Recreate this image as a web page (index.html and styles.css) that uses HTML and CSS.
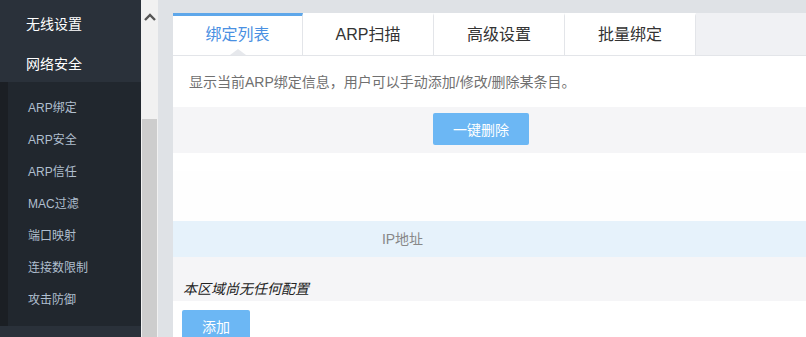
FILE: index.html
```html
<!DOCTYPE html>
<html lang="zh-CN">
<head>
<meta charset="utf-8">
<title>ARP绑定</title>
<link rel="stylesheet" href="styles.css">
</head>
<body>
<div class="page">
  <aside class="sidebar">
    <div class="menu-top">
      <div class="menu-item">无线设置</div>
      <div class="menu-item">网络安全</div>
    </div>
    <ul class="submenu">
      <li>ARP绑定</li>
      <li>ARP安全</li>
      <li>ARP信任</li>
      <li>MAC过滤</li>
      <li>端口映射</li>
      <li>连接数限制</li>
      <li>攻击防御</li>
    </ul>
    <div class="menu-bottom"></div>
  </aside>
  <div class="scrollbar">
    <div class="scroll-up">
      <svg width="12" height="9" viewBox="0 0 12 9"><path d="M1 8 L6 3 L11 8" fill="none" stroke="#555" stroke-width="2.4"/></svg>
    </div>
    <div class="scroll-thumb"></div>
  </div>
  <main class="main">
    <div class="card">
      <div class="tabs">
        <div class="tab active">绑定列表<span class="caret"></span></div>
        <div class="tab">ARP扫描</div>
        <div class="tab">高级设置</div>
        <div class="tab">批量绑定</div>
        <div class="tab-fill"></div>
      </div>
      <p class="desc">显示当前ARP绑定信息，用户可以手动添加/修改/删除某条目。</p>
      <div class="toolbar">
        <button class="btn btn-del">一键删除</button>
      </div>
      <div class="spacer-a"></div>
      <div class="spacer-b"></div>
      <div class="table-head">
        <div class="th">IP地址</div>
      </div>
      <div class="empty">本区域尚无任何配置</div>
      <div class="actions">
        <button class="btn btn-add">添加</button>
      </div>
    </div>
  </main>
</div>
</body>
</html>
```

FILE: styles.css
```css
* { box-sizing: border-box; }
html, body { margin: 0; padding: 0; }
body {
  font-family: "Noto Sans CJK SC", "Liberation Sans", sans-serif;
  width: 806px;
  height: 337px;
  overflow: hidden;
  background: #dfe2e6;
}
.page {
  display: flex;
  height: 337px;
}
.sidebar {
  width: 141px;
  flex: none;
  display: flex;
  flex-direction: column;
  background: #2a313a;
}
.menu-top {
  flex: none;
  height: 82px;
  padding-top: 3px;
  overflow: hidden;
}
.menu-item {
  height: 40px;
  line-height: 40px;
  padding-left: 26px;
  color: #fff;
  font-size: 14px;
}
.submenu {
  flex: none;
  list-style: none;
  margin: 0;
  padding: 10px 0;
  background: #21272e;
  border-left: 8px solid #1b1f24;
}
.submenu li {
  height: 32px;
  line-height: 32px;
  padding-left: 20px;
  font-size: 12px;
  color: #b0bfcf;
  font-family: "Liberation Sans", "Noto Sans CJK SC", sans-serif;
}
.menu-bottom { flex: 1; }
.scrollbar {
  width: 17px;
  flex: none;
  background: #f1f1f1;
  display: flex;
  flex-direction: column;
}
.scroll-up {
  flex: none;
  height: 119px;
  padding: 12px 0 0 3px;
}
.scroll-up svg { display: block; }
.scroll-thumb {
  flex: 1;
  margin: 0 1px;
  background: #cdcdcd;
}
.main {
  flex: 1;
  padding: 13px 0 0 15px;
  min-width: 0;
}
.card {
  background: #fff;
  height: 100%;
  display: flex;
  flex-direction: column;
  overflow: hidden;
}
.card > * { flex-shrink: 0; }
.tabs {
  display: flex;
  height: 43px;
  border-bottom: 1px solid #e3e5e9;
}
.tab {
  position: relative;
  width: 131px;
  flex: none;
  border-right: 1px solid #e3e5e9;
  border-top: 3px solid #fff;
  font-size: 16px;
  color: #333;
  text-align: center;
  line-height: 38px;
  font-family: "Liberation Sans", "Noto Sans CJK SC", sans-serif;
}
.tab:first-child { width: 130px; }
.tab.active {
  border-top-color: #5ea7ea;
  color: #4a90e2;
}
.caret {
  position: absolute;
  left: 57px;
  bottom: 0;
  width: 0;
  height: 0;
  border-left: 8px solid transparent;
  border-right: 8px solid transparent;
  border-bottom: 6px solid #e6e8ec;
}
.tab-fill {
  flex: 1;
  background: #f0f1f4;
}
.desc {
  margin: 0;
  height: 51px;
  padding: 15px 0 0 16px;
  line-height: 22px;
  font-size: 14px;
  color: #707070;
  font-family: "Liberation Sans", "Noto Sans CJK SC", sans-serif;
}
.toolbar {
  height: 46px;
  background: #f5f5f7;
  padding: 6px 0 0 260px;
}
.btn {
  border: none;
  border-radius: 2px;
  background: #6cb7f4;
  color: #fff;
  font-size: 14px;
  font-family: "Noto Sans CJK SC", sans-serif;
  padding: 0;
}
.btn-del {
  width: 96px;
  height: 32px;
}
.spacer-a { height: 18px; background: #fff; }
.spacer-b { height: 50px; background: #fefefe; }
.table-head {
  height: 36px;
  background: #e6f2fb;
  display: flex;
}
.th {
  width: 459px;
  text-align: center;
  line-height: 36px;
  font-size: 14px;
  color: #888;
  font-family: "Liberation Sans", "Noto Sans CJK SC", sans-serif;
}
.empty {
  height: 44px;
  background: #f5f5f7;
  padding: 20px 0 0 10px;
  line-height: 22px;
  font-size: 14px;
  font-style: italic;
  color: #222;
}
.actions {
  flex: 1;
  padding: 9px 0 0 9px;
}
.btn-add {
  width: 68px;
  height: 32px;
}
```
